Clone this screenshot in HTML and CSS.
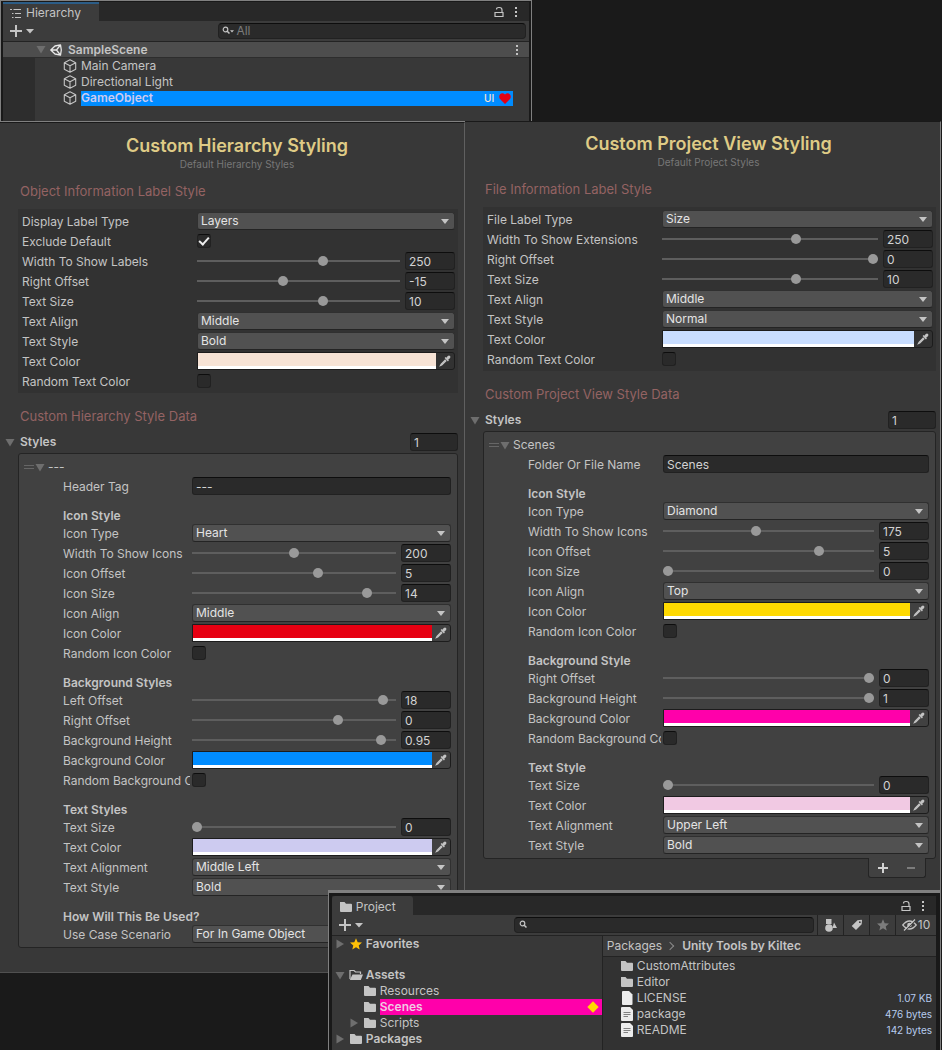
FILE: index.html
```html
<!DOCTYPE html>
<html lang="en">
<head>
<meta charset="utf-8">
<meta name="viewport" content="width=device-width, initial-scale=1">
<title>Unity Tools by Kiltec</title>
<link rel="stylesheet" href="styles.css">
</head>
<body>
<svg class="sprite" aria-hidden="true">
  <symbol id="i-cube" viewBox="0 0 14 14"><path d="M7 .8 12.7 3.7V10.3L7 13.3 1.3 10.3V3.7ZM1.3 3.7 7 6.8 12.7 3.7M7 6.8V13.3" fill="none" stroke="currentColor" stroke-width="1.1" stroke-linejoin="round"/></symbol>
  <symbol id="i-folder" viewBox="0 0 14 12"><path d="M1 1H5.500L7 2.700H12Q13 2.700 13 3.700V10Q13 11 12 11H2Q1 11 1 10Z" fill="currentColor"/></symbol>
  <symbol id="i-open" viewBox="0 0 14 12"><path d="M1 10V1.500H5L6.500 3H11.500V5" fill="none" stroke="currentColor" stroke-width="1.200"/><path d="M3.500 5.500H14L11.800 11H.8Z" fill="currentColor"/></symbol>
  <symbol id="i-lock" viewBox="0 0 10 12"><path d="M1 6.500H9V10.500H1ZM2.500 3.500Q2.500 1.500 4.800 1.500H5.500Q8 1.500 8 4V6" fill="none" stroke="currentColor" stroke-width="1.200"/></symbol>
  <symbol id="i-dots" viewBox="0 0 4 12"><path d="M1 1H3V3H1ZM1 5H3V7H1ZM1 9H3V11H1Z" fill="currentColor"/></symbol>
  <symbol id="i-plus" viewBox="0 0 12 12"><path d="M6 0V12M0 6H12" fill="none" stroke="currentColor" stroke-width="2"/></symbol>
  <symbol id="i-caret" viewBox="0 0 8 5"><path d="M0 0H8L4 4.500Z" fill="currentColor"/></symbol>
  <symbol id="i-down" viewBox="0 0 10 9"><path d="M.5 1H9.500L5 8.500Z" fill="currentColor"/></symbol>
  <symbol id="i-right" viewBox="0 0 9 10"><path d="M1 .5V9.500L8.500 5Z" fill="currentColor"/></symbol>
  <symbol id="i-search" viewBox="0 0 10 10"><circle cx="3.500" cy="3.500" r="2.300" fill="none" stroke="currentColor" stroke-width="1.200"/><path d="M5.200 5.200 7.500 7.500" stroke="currentColor" stroke-width="1.500"/></symbol>
  <symbol id="i-star" viewBox="0 0 12 12"><path d="M6 .3 7.700 4.200 12 4.600 8.700 7.400 9.700 11.600 6 9.300 2.300 11.600 3.300 7.400 0 4.600 4.300 4.200Z" fill="currentColor"/></symbol>
  <symbol id="i-list" viewBox="0 0 11 9"><path d="M0 .5H2M3.500 .5H11M2 4.500H3.500M5 4.500H11M2 8.500H3.500M5 8.500H11" stroke="currentColor"/></symbol>
  <symbol id="i-unity" viewBox="0 0 12 12"><path d="M5 2 10.500 .8 11.300 6 10.500 11.200 5 10 .8 6ZM1 6H6.500L10 1.500M6.500 6 10 10.500" fill="none" stroke="currentColor" stroke-width="1.300" stroke-linejoin="round"/></symbol>
  <symbol id="i-heart" viewBox="0 0 12 11"><path d="M6 11 1 6C-1.500 2.500 2.500-1.800 6 1.600 9.500-1.800 13.500 2.500 11 6Z" fill="currentColor"/></symbol>
  <symbol id="i-drop" viewBox="0 0 12 12"><path d="M7.300 2.800 8.800 1.100Q10 0 11 1T10.900 3.200L9.200 4.700 9.900 5.400 8.900 6.400 5.600 3.100 6.600 2.100Z" fill="currentColor"/><path d="M6.500 4.700 2 9.200 1.300 10.700 2.800 10 7.300 5.500" fill="none" stroke="currentColor" stroke-width="1.100"/></symbol>
  <symbol id="i-doc" viewBox="0 0 12 14"><path d="M1 1Q1 0 2 0H8L11.500 3.500V13Q11.500 14 10.500 14H2Q1 14 1 13Z" fill="#ececec"/></symbol>
  <symbol id="i-text" viewBox="0 0 12 14"><path d="M0 1Q0 0 1 0H9L12 3V13Q12 14 11 14H1Q0 14 0 13Z" fill="#ececec"/><path d="M2.500 5.500H9.500M2.500 7.500H9.500M2.500 9.500H7" stroke="#666" stroke-width=".8"/></symbol>
  <symbol id="i-shapes" viewBox="0 0 12 13"><path d="M1 0H6.500V5H1ZM7.500 9 9 3.500 12 9Z" fill="currentColor"/><circle cx="4" cy="9" r="3.800" fill="currentColor"/></symbol>
  <symbol id="i-tag" viewBox="0 0 12 12"><path fill-rule="evenodd" d="M6.500 1.200 10.500 .8Q11 .8 11 1.500L10.700 5.300 5 11 .7 7Z M8.800 2.300A.9.900 0 1 0 8.900 4.100.9.900 0 1 0 8.800 2.300Z" fill="currentColor"/></symbol>
  <symbol id="i-eye" viewBox="0 0 15 12"><path d="M.8 6Q4 2 7.500 2T14.200 6Q11 10 7.500 10T.8 6Z" fill="none" stroke="currentColor" stroke-width="1.300"/><circle cx="7.500" cy="6" r="2.300" fill="currentColor"/><path d="M3 11.800 13.500 1.300" stroke="#3c3c3c" stroke-width="1.200"/><path d="M2 11.500 13 .5" stroke="currentColor" stroke-width="1.300"/></symbol>
</svg>

<main class="desktop">
  <section class="window hierarchy">
    <header class="tabbar">
      <h2 class="tab focused"><svg class="i-list"><use href="#i-list"/></svg>Hierarchy</h2>
      <span class="wincontrols"><svg class="i-lock"><use href="#i-lock"/></svg><svg class="i-dots"><use href="#i-dots"/></svg></span>
    </header>
    <div class="toolbar">
      <button class="add" aria-label="Create"><svg class="i-plus"><use href="#i-plus"/></svg><svg class="i-caret"><use href="#i-caret"/></svg></button>
      <label class="search"><svg class="i-search"><use href="#i-search"/></svg><svg class="i-mini"><use href="#i-caret"/></svg><input type="text" placeholder="All" aria-label="Search hierarchy"></label>
    </div>
    <div class="scene"><svg class="i-down"><use href="#i-down"/></svg><svg class="i-unity"><use href="#i-unity"/></svg><b>SampleScene</b><svg class="i-dots"><use href="#i-dots"/></svg></div>
    <ul class="objects">
      <li><svg class="i-cube"><use href="#i-cube"/></svg><span>Main Camera</span></li>
      <li><svg class="i-cube"><use href="#i-cube"/></svg><span>Directional Light</span></li>
      <li><svg class="i-cube"><use href="#i-cube"/></svg><span class="picked"><b>GameObject</b><small>UI</small><svg class="i-heart"><use href="#i-heart"/></svg></span></li>
    </ul>
  </section>

  <div class="inspectors">
    <section class="panel left">
      <h1>Custom Hierarchy Styling</h1>
      <p class="sub">Default Hierarchy Styles</p>
      <h2 class="section">Object Information Label Style</h2>
      <div class="group">
        <div class="row"><label for="a1">Display Label Type</label><div class="select"><select id="a1"><option>Layers</option></select></div></div>
        <div class="row"><label for="a2">Exclude Default</label><input type="checkbox" id="a2" checked></div>
        <div class="row"><label for="a3">Width To Show Labels</label><div class="slide"><input type="range" id="a3" max="1000" value="627"><input type="text" value="250" aria-label="Width To Show Labels value"></div></div>
        <div class="row"><label for="a4">Right Offset</label><div class="slide"><input type="range" id="a4" max="1000" value="420"><input type="text" value="-15" aria-label="Right Offset value"></div></div>
        <div class="row"><label for="a5">Text Size</label><div class="slide"><input type="range" id="a5" max="1000" value="627"><input type="text" value="10" aria-label="Text Size value"></div></div>
        <div class="row"><label for="a6">Text Align</label><div class="select"><select id="a6"><option>Middle</option></select></div></div>
        <div class="row"><label for="a7">Text Style</label><div class="select"><select id="a7"><option>Bold</option></select></div></div>
        <div class="row"><label for="a8">Text Color</label><div class="color"><input type="color" id="a8" value="#f7e3d5"><button aria-label="Pick color"><svg class="i-drop"><use href="#i-drop"/></svg></button></div></div>
        <div class="row"><label for="a9">Random Text Color</label><input type="checkbox" id="a9"></div>
      </div>
      <h2 class="section second">Custom Hierarchy Style Data</h2>
      <div class="styles"><svg class="i-down"><use href="#i-down"/></svg><label for="an">Styles</label><input type="text" id="an" value="1"></div>
      <div class="list">
        <div class="element"><i class="handle"></i><svg class="i-down"><use href="#i-down"/></svg>---</div>
        <div class="row"><label for="b1">Header Tag</label><input type="text" id="b1" value="---"></div>
        <h3>Icon Style</h3>
        <div class="row"><label for="b2">Icon Type</label><div class="select"><select id="b2"><option>Heart</option></select></div></div>
        <div class="row"><label for="b3">Width To Show Icons</label><div class="slide"><input type="range" id="b3" max="1000" value="500"><input type="text" value="200" aria-label="Width To Show Icons value"></div></div>
        <div class="row"><label for="b4">Icon Offset</label><div class="slide"><input type="range" id="b4" max="1000" value="625"><input type="text" value="5" aria-label="Icon Offset value"></div></div>
        <div class="row"><label for="b5">Icon Size</label><div class="slide"><input type="range" id="b5" max="1000" value="876"><input type="text" value="14" aria-label="Icon Size value"></div></div>
        <div class="row"><label for="b6">Icon Align</label><div class="select"><select id="b6"><option>Middle</option></select></div></div>
        <div class="row"><label for="b7">Icon Color</label><div class="color"><input type="color" id="b7" value="#e60012"><button aria-label="Pick color"><svg class="i-drop"><use href="#i-drop"/></svg></button></div></div>
        <div class="row"><label for="b8">Random Icon Color</label><input type="checkbox" id="b8"></div>
        <h3>Background Styles</h3>
        <div class="row"><label for="b9">Left Offset</label><div class="slide"><input type="range" id="b9" max="1000" value="959"><input type="text" value="18" aria-label="Left Offset value"></div></div>
        <div class="row"><label for="b10">Right Offset</label><div class="slide"><input type="range" id="b10" max="1000" value="727"><input type="text" value="0" aria-label="Background Right Offset value"></div></div>
        <div class="row"><label for="b11">Background Height</label><div class="slide"><input type="range" id="b11" max="1000" value="949"><input type="text" value="0.95" aria-label="Background Height value"></div></div>
        <div class="row"><label for="b12">Background Color</label><div class="color"><input type="color" id="b12" value="#008cff"><button aria-label="Pick color"><svg class="i-drop"><use href="#i-drop"/></svg></button></div></div>
        <div class="row"><label for="b13">Random Background Color</label><input type="checkbox" id="b13"></div>
        <h3>Text Styles</h3>
        <div class="row"><label for="b14">Text Size</label><div class="slide"><input type="range" id="b14" max="1000" value="0"><input type="text" value="0" aria-label="Text Size value"></div></div>
        <div class="row"><label for="b15">Text Color</label><div class="color"><input type="color" id="b15" value="#cdcbf0"><button aria-label="Pick color"><svg class="i-drop"><use href="#i-drop"/></svg></button></div></div>
        <div class="row"><label for="b16">Text Alignment</label><div class="select"><select id="b16"><option>Middle Left</option></select></div></div>
        <div class="row"><label for="b17">Text Style</label><div class="select"><select id="b17"><option>Bold</option></select></div></div>
        <h3>How Will This Be Used?</h3>
        <div class="row"><label for="b18">Use Case Scenario</label><div class="select"><select id="b18"><option>For In Game Object</option></select></div></div>
      </div>
    </section>

    <section class="panel right">
      <h1>Custom Project View Styling</h1>
      <p class="sub">Default Project Styles</p>
      <h2 class="section">File Information Label Style</h2>
      <div class="group">
        <div class="row"><label for="c1">File Label Type</label><div class="select"><select id="c1"><option>Size</option></select></div></div>
        <div class="row"><label for="c2">Width To Show Extensions</label><div class="slide"><input type="range" id="c2" max="1000" value="627"><input type="text" value="250" aria-label="Width To Show Extensions value"></div></div>
        <div class="row"><label for="c3">Right Offset</label><div class="slide"><input type="range" id="c3" max="1000" value="1000"><input type="text" value="0" aria-label="Right Offset value"></div></div>
        <div class="row"><label for="c4">Text Size</label><div class="slide"><input type="range" id="c4" max="1000" value="627"><input type="text" value="10" aria-label="Text Size value"></div></div>
        <div class="row"><label for="c5">Text Align</label><div class="select"><select id="c5"><option>Middle</option></select></div></div>
        <div class="row"><label for="c6">Text Style</label><div class="select"><select id="c6"><option>Normal</option></select></div></div>
        <div class="row"><label for="c7">Text Color</label><div class="color"><input type="color" id="c7" value="#c8ddff"><button aria-label="Pick color"><svg class="i-drop"><use href="#i-drop"/></svg></button></div></div>
        <div class="row"><label for="c8">Random Text Color</label><input type="checkbox" id="c8"></div>
      </div>
      <h2 class="section second">Custom Project View Style Data</h2>
      <div class="styles"><svg class="i-down"><use href="#i-down"/></svg><label for="cn">Styles</label><input type="text" id="cn" value="1"></div>
      <div class="list">
        <div class="element"><i class="handle"></i><svg class="i-down"><use href="#i-down"/></svg>Scenes</div>
        <div class="row"><label for="d1">Folder Or File Name</label><input type="text" id="d1" value="Scenes"></div>
        <h3>Icon Style</h3>
        <div class="row"><label for="d2">Icon Type</label><div class="select"><select id="d2"><option>Diamond</option></select></div></div>
        <div class="row"><label for="d3">Width To Show Icons</label><div class="slide"><input type="range" id="d3" max="1000" value="438"><input type="text" value="175" aria-label="Width To Show Icons value"></div></div>
        <div class="row"><label for="d4">Icon Offset</label><div class="slide"><input type="range" id="d4" max="1000" value="752"><input type="text" value="5" aria-label="Icon Offset value"></div></div>
        <div class="row"><label for="d5">Icon Size</label><div class="slide"><input type="range" id="d5" max="1000" value="0"><input type="text" value="0" aria-label="Icon Size value"></div></div>
        <div class="row"><label for="d6">Icon Align</label><div class="select"><select id="d6"><option>Top</option></select></div></div>
        <div class="row"><label for="d7">Icon Color</label><div class="color"><input type="color" id="d7" value="#ffd900"><button aria-label="Pick color"><svg class="i-drop"><use href="#i-drop"/></svg></button></div></div>
        <div class="row"><label for="d8">Random Icon Color</label><input type="checkbox" id="d8"></div>
        <h3>Background Style</h3>
        <div class="row"><label for="d9">Right Offset</label><div class="slide"><input type="range" id="d9" max="1000" value="1000"><input type="text" value="0" aria-label="Background Right Offset value"></div></div>
        <div class="row"><label for="d10">Background Height</label><div class="slide"><input type="range" id="d10" max="1000" value="1000"><input type="text" value="1" aria-label="Background Height value"></div></div>
        <div class="row"><label for="d11">Background Color</label><div class="color"><input type="color" id="d11" value="#ff00aa"><button aria-label="Pick color"><svg class="i-drop"><use href="#i-drop"/></svg></button></div></div>
        <div class="row"><label for="d12">Random Background Color</label><input type="checkbox" id="d12"></div>
        <h3>Text Style</h3>
        <div class="row"><label for="d13">Text Size</label><div class="slide"><input type="range" id="d13" max="1000" value="0"><input type="text" value="0" aria-label="Text Size value"></div></div>
        <div class="row"><label for="d14">Text Color</label><div class="color"><input type="color" id="d14" value="#f1c9e3"><button aria-label="Pick color"><svg class="i-drop"><use href="#i-drop"/></svg></button></div></div>
        <div class="row"><label for="d15">Text Alignment</label><div class="select"><select id="d15"><option>Upper Left</option></select></div></div>
        <div class="row"><label for="d16">Text Style</label><div class="select"><select id="d16"><option>Bold</option></select></div></div>
      </div>
      <div class="listfoot"><button aria-label="Add style"><i class="sign plus"></i></button><button aria-label="Remove style" disabled><i class="sign"></i></button></div>
    </section>
  </div>

  <section class="window project">
    <header class="tabbar">
      <h2 class="tab"><svg class="i-folder"><use href="#i-folder"/></svg>Project</h2>
      <span class="wincontrols"><svg class="i-lock"><use href="#i-lock"/></svg><svg class="i-dots"><use href="#i-dots"/></svg></span>
    </header>
    <div class="toolbar">
      <button class="add" aria-label="Create"><svg class="i-plus"><use href="#i-plus"/></svg><svg class="i-caret"><use href="#i-caret"/></svg></button>
      <label class="search"><svg class="i-search"><use href="#i-search"/></svg><input type="text" aria-label="Search project"></label>
      <div class="filters">
        <button aria-label="Search by type"><svg class="i-shapes"><use href="#i-shapes"/></svg></button>
        <button aria-label="Search by label"><svg class="i-tag"><use href="#i-tag"/></svg></button>
        <button aria-label="Save search" class="dim"><svg class="i-star"><use href="#i-star"/></svg></button>
        <button class="hidden-count"><svg class="i-eye"><use href="#i-eye"/></svg>10</button>
      </div>
    </div>
    <div class="split">
      <ul class="tree">
        <li class="gap"><svg class="i-right"><use href="#i-right"/></svg><svg class="i-star gold"><use href="#i-star"/></svg><b>Favorites</b></li>
        <li><svg class="i-down"><use href="#i-down"/></svg><svg class="i-folder"><use href="#i-open"/></svg><b>Assets</b></li>
        <li class="child"><i class="noarrow"></i><svg class="i-folder"><use href="#i-folder"/></svg><span>Resources</span></li>
        <li class="child"><i class="noarrow"></i><svg class="i-folder"><use href="#i-folder"/></svg><span class="picked pink"><b>Scenes</b><i class="diamond"></i></span></li>
        <li class="child"><svg class="i-right"><use href="#i-right"/></svg><svg class="i-folder"><use href="#i-folder"/></svg><span>Scripts</span></li>
        <li><svg class="i-right"><use href="#i-right"/></svg><svg class="i-folder"><use href="#i-folder"/></svg><b>Packages</b></li>
      </ul>
      <div class="files">
        <nav class="crumbs"><a href="#">Packages</a><i class="chevron"></i><b>Unity Tools by Kiltec</b></nav>
        <ul>
          <li><svg class="i-folder"><use href="#i-folder"/></svg><span>CustomAttributes</span></li>
          <li><svg class="i-folder"><use href="#i-folder"/></svg><span>Editor</span></li>
          <li><svg class="i-doc"><use href="#i-doc"/></svg><span>LICENSE</span><small>1.07 KB</small></li>
          <li><svg class="i-doc"><use href="#i-text"/></svg><span>package</span><small>476 bytes</small></li>
          <li><svg class="i-doc"><use href="#i-text"/></svg><span>README</span><small>142 bytes</small></li>
        </ul>
      </div>
    </div>
  </section>
</main>
</body>
</html>
```

FILE: styles.css
```css
* { box-sizing: border-box; }
body { margin: 0; background: #1a1a1a; color: #c4c4c4; font: 12px/16px Inter, "Liberation Sans", sans-serif; }
h1, h2, h3, p, ul { margin: 0; padding: 0; font-weight: 400; font-size: 12px; }
ul { list-style: none; }
b { font-weight: 600; }
i { font-style: normal; }
a { color: inherit; text-decoration: none; }
button, input, select { font: inherit; color: inherit; margin: 0; padding: 0; border: 0; background: none; border-radius: 0; min-width: 0; }
svg { display: block; flex: none; }
.sprite { position: absolute; width: 0; height: 0; }
.desktop { position: relative; min-height: 1050px; overflow: hidden; }

/* Icons */
.i-cube { width: 14px; height: 14px; }
.i-folder { width: 14px; height: 12px; }
.i-lock { width: 10px; height: 12px; }
.i-dots { width: 4px; height: 12px; }
.i-plus { width: 12px; height: 12px; }
.i-caret { width: 8px; height: 5px; }
.i-mini { width: 4px; height: 3px; margin-left: -2px; }
.i-down { width: 10px; height: 9px; color: #6e6e6e; }
.i-right { width: 10px; height: 10px; color: #6e6e6e; }
.i-search { width: 10px; height: 10px; }
.i-star, .i-unity, .i-drop, .i-tag { width: 12px; height: 12px; }
.i-list { width: 11px; height: 9px; }
.i-heart { width: 12px; height: 11px; color: #e60012; }
.i-doc { width: 14px; height: 14px; }
.i-shapes { width: 12px; height: 13px; }
.i-eye { width: 15px; height: 12px; }

/* Editor windows */
.window { background: #383838; border: 1px solid #808080; display: flex; flex-direction: column; }
.tabbar { display: flex; justify-content: space-between; background: #282828; height: 19px; }
.tab { display: flex; align-items: center; gap: 5px; background: #3c3c3c; padding: 2px 17px 0 8px; height: 19px; border-radius: 3px 3px 0 0; }
.focused { border-top: 2px solid #2c5d87; padding-top: 1px; border-radius: 0; }
.wincontrols { display: flex; align-items: center; gap: 10px; padding-right: 11px; }
.toolbar { display: flex; align-items: center; justify-content: space-between; background: #3c3c3c; height: 21px; border-bottom: 1px solid #232323; }
.add { display: flex; align-items: center; gap: 4px; padding-left: 7px; }
.search { display: flex; align-items: center; background: #2a2a2a; border: 1px solid #212121; border-top-color: #0d0d0d; border-radius: 4px; height: 16px; padding-left: 4px; }
.search input { flex: 1; outline: 0; padding-left: 2px; height: 14px; }
.search input::placeholder { color: #7c7c7c; opacity: 1; }

.hierarchy { width: 56.5%; height: 122px; box-shadow: inset 2px 1px #191919, inset -2px 0 #191919; padding: 1px 2px 0; }
.hierarchy .search { width: 58.5%; margin-right: 3px; padding-left: 3px; }
.scene { display: flex; align-items: center; background: #4d4d4d; height: 16px; border-bottom: 1px solid #2d2d2d; padding: 0 10px 0 33px; }
.scene b { flex: 1; padding-left: 6px; }
.scene .i-unity { margin-left: 4px; color: #e8e8e8; }
.hierarchy .tab { padding-left: 7px; padding-right: 18px; }
.objects { flex: 1; border-left: 32px solid #2d2d2d; padding: 0 16px 0 28px; }
.objects li { display: flex; align-items: center; gap: 4px; height: 16px; }
.picked { flex: 1; display: flex; align-items: center; height: 15px; background: #008cff; color: #cdcbf0; padding-right: 2px; }
.picked b { flex: 1; }
.picked small { font-size: 10px; font-weight: 500; color: #f7e3d5; padding-right: 5px; }

/* Inspector panels */
.inspectors { display: grid; grid-template-columns: 465fr 477fr; align-items: start; margin-top: -1px; }
.panel { background: #383838; border-top: 1px solid #191919; }
.left { border-right: 1px solid #606060; border-bottom: 1px solid #505050; padding: 10px 6px 24px 18px; margin-top: 1px; }
.right { border-right: 1px solid #808080; margin-right: 1px; padding: 9px 4px 60px 18px; }
h1 { font-size: 18px; font-weight: 600; line-height: 26px; text-align: center; color: #dfcb86; padding-right: 2px; }
.sub { font-size: 10px; line-height: 10px; text-align: center; color: #777; padding-right: 2px; }
.section { font-size: 13px; line-height: 16px; color: #946363; padding: 14px 2px 10px; }
.second { padding: 15px 2px 9px; }
.group { background: #323232; padding: 2px 3px 2px 4px; }
.row { display: grid; grid-template-columns: 175px minmax(0, 1fr); align-items: center; height: 20px; }
.row label { overflow: hidden; white-space: nowrap; padding-top: 1px; margin-right: 2px; }
.list .row { grid-template-columns: 129px minmax(0, 1fr); padding: 0 6px 0 44px; }
.right .list .row { grid-template-columns: 135px minmax(0, 1fr); }
.select { position: relative; height: 18px; }
.select::after { content: ""; position: absolute; right: 6px; top: 7px; border: 4px solid transparent; border-top: 5px solid #c4c4c4; border-bottom: 0; pointer-events: none; }
.select select { appearance: none; width: 100%; height: 18px; background: #515151; border: 1px solid #303030; border-bottom-color: #242424; border-radius: 3px; padding-left: 3px; color: #e4e4e4; line-height: 16px; }
input[type=text] { outline: 0; }
.row input[type=text], .styles input { width: 100%; height: 18px; background: #2a2a2a; border: 1px solid #212121; border-top-color: #0d0d0d; border-radius: 3px; padding: 1px 0 0 3px; color: #d2d2d2; }
.slide { display: grid; grid-template-columns: minmax(0, 1fr) 50px; gap: 5px; align-items: center; }
input[type=range] { appearance: none; width: 100%; height: 10px; background: linear-gradient(#5e5e5e, #5e5e5e) center / 100% 2px no-repeat; }
input[type=range]::-webkit-slider-thumb { appearance: none; width: 10px; height: 10px; border-radius: 50%; background: #999; }
input[type=checkbox] { appearance: none; width: 14px; height: 14px; background: #2a2a2a; border: 1px solid #212121; border-top-color: #0d0d0d; border-radius: 3px; display: grid; place-items: center; }
input[type=checkbox]:checked::before { content: ""; width: 8px; height: 4px; border: solid #eee; border-width: 0 0 2px 2px; transform: translateY(-1px) rotate(-48deg); }
.color { display: flex; height: 18px; border: 1px solid #1c1c1c; border-radius: 0 3px 3px 0; }
.color input { appearance: none; flex: 1; height: 16px; border-bottom: 3px solid #fff; }
.color input::-webkit-color-swatch-wrapper { padding: 0; }
.color input::-webkit-color-swatch { border: 0; border-radius: 0; }
.color button { width: 18px; display: grid; place-items: center; }
.styles { display: flex; align-items: center; height: 18px; margin: 0 0 2px -13px; }
.styles label { flex: 1; font-weight: 600; padding-left: 5px; }
.styles input { width: 48px; }
.list { border: 1px solid #242424; border-radius: 3px; background: #414141; padding: 4px 0 3px; }
.element { display: flex; align-items: center; height: 18px; padding-left: 5px; }
.element .i-down { margin: 0 3px 0 1px; }
.handle { width: 10px; height: 4px; border: solid #666; border-width: 1px 0; }
h3 { font-weight: 600; height: 27px; padding: 12px 0 0 44px; }
.listfoot { display: flex; width: 58px; height: 20px; margin: -1px 10px 0 auto; border: 1px solid #242424; border-top: 0; border-radius: 0 0 3px 3px; background: #414141; }
.listfoot button { flex: 1; display: grid; place-items: center; }
.sign { width: 8px; height: 2px; background: #7c7c7c; }
.plus { width: 10px; height: 10px; background: linear-gradient(#d2d2d2, #d2d2d2) center / 100% 2px no-repeat, linear-gradient(#d2d2d2, #d2d2d2) center / 2px 100% no-repeat; }

/* Project browser, lying over the panels */
.project { position: absolute; top: 890px; bottom: 0; right: 1px; width: 65.1%; border-width: 3px 1px 0; box-shadow: inset 3px 3px #191919, inset -4px 0 #191919; padding: 3px 4px 0 3px; }
.project .tab { padding-left: 7px; gap: 3px; }
.project .search { width: 49.7%; margin-left: auto; margin-right: 3px; }
.filters { display: flex; height: 20px; }
.filters button { width: 26px; display: flex; align-items: center; justify-content: center; border-left: 1px solid #232323; gap: 1px; }
.filters .hidden-count { width: 41px; }
.filters .dim { color: #7c7c7c; }
.split { flex: 1; display: grid; grid-template-columns: 270fr 334fr; }
.tree li, .files li { display: flex; align-items: center; height: 16px; }
.tree li { padding-left: 3px; gap: 4px; }
.tree li.child { padding-left: 17px; }
.tree li > span, .tree li > b { margin-left: -1px; }
.tree .gap { margin-bottom: 15px; }
.tree .i-star { width: 14px; }
.gold { color: #ffc107; }
.noarrow { width: 10px; }
.tree .pink { background: #ff00aa; color: #f1c9e3; height: 16px; padding-right: 5px; }
.diamond { width: 8px; height: 8px; background: #ffd900; transform: rotate(45deg); }
.files { background: #323232; border-left: 1px solid #232323; }
.crumbs { display: flex; align-items: center; gap: 7px; height: 21px; padding-left: 4px; background: #3c3c3c; border-bottom: 1px solid #232323; }
.chevron { width: 6px; height: 6px; border: solid #8a8a8a; border-width: 1px 1px 0 0; transform: translateX(-2px) rotate(45deg); }
.files ul { padding: 1px 4px 0 17px; }
.files span { flex: 1; padding-left: 3px; }
.files small { font-size: 10px; color: #b6cbee; }
```
